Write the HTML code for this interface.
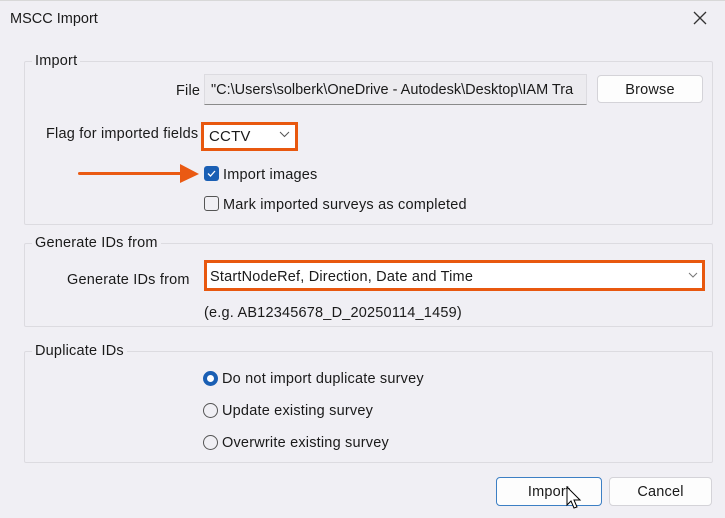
<!DOCTYPE html>
<html><head><style>
*{margin:0;padding:0;box-sizing:border-box}
body{width:725px;height:518px;background:#f0eff4;font-family:"Liberation Sans",sans-serif;font-size:14.5px;letter-spacing:0.2px;color:#1a1a1a;position:relative;overflow:hidden}
.a{position:absolute;white-space:nowrap}
.grp{position:absolute;border:1px solid #dcdbe0;border-radius:2px}
.lg{position:absolute;background:#f0eff4;padding:0 3px;white-space:nowrap}
.orange{border:3px solid #e8580f}
.cb{position:absolute;width:15px;height:15px;border-radius:3px}
.rd{position:absolute;width:15px;height:15px;border-radius:50%}
.btn{position:absolute;background:#fdfdfd;border:1px solid #d4d3d8;border-radius:4px;text-align:center}
</style></head><body>
<div style="position:absolute;left:0;top:0;width:725px;height:1px;background:#d8d8d8"></div>
<div class="a" style="left:10px;top:11px;font-size:14.5px;letter-spacing:0">MSCC Import</div>
<svg class="a" style="left:693px;top:11px" width="14" height="14"><path d="M1 1L13 13M13 1L1 13" stroke="#333" stroke-width="1.3"/></svg>

<div class="grp" style="left:24px;top:61px;width:689px;height:164px"></div>
<div class="lg" style="left:32px;top:53px">Import</div>
<div class="a" style="left:176px;top:83px">File</div>
<div class="a" style="left:204px;top:74px;width:383px;height:31px;background:#ecebef;border:1px solid #dcdbe0;border-bottom:1px solid #8a8a8a;padding:7px 6px;overflow:hidden;letter-spacing:0">"C:\Users\solberk\OneDrive - Autodesk\Desktop\IAM Tra</div>
<div class="btn" style="left:597px;top:75px;width:106px;height:28px;line-height:28px">Browse</div>
<div class="a" style="left:46px;top:126px">Flag for imported fields</div>
<div class="a orange" style="left:201px;top:122px;width:97px;height:29px;background:#fff"></div>
<div class="a" style="left:209px;top:128px;font-size:15px">CCTV</div>
<svg class="a" style="left:279px;top:131px" width="11" height="7"><path d="M1 1L5.5 5.5L10 1" stroke="#555" fill="none"/></svg>
<div class="a" style="left:78px;top:172px;width:110px;height:3px;background:#ea5a13;border-radius:2px"></div>
<svg class="a" style="left:180px;top:164px" width="20" height="20"><path d="M0 0L19 10L0 19Z" fill="#ea5a13"/></svg>
<div class="cb" style="left:204px;top:166px;background:#1a5fb4"><svg width="15" height="15"><path d="M4 7.5L6.5 10L11 5" stroke="#fff" stroke-width="1.3" fill="none"/></svg></div>
<div class="a" style="left:223px;top:167px">Import images</div>
<div class="cb" style="left:204px;top:196px;border:1px solid #555"></div>
<div class="a" style="left:223px;top:197px">Mark imported surveys as completed</div>

<div class="grp" style="left:24px;top:243px;width:689px;height:84px"></div>
<div class="lg" style="left:32px;top:235px">Generate IDs from</div>
<div class="a" style="left:67px;top:272px">Generate IDs from</div>
<div class="a orange" style="left:204px;top:260px;width:501px;height:31px;background:#fff"></div>
<div class="a" style="left:210px;top:269px">StartNodeRef, Direction, Date and Time</div>
<svg class="a" style="left:688px;top:272px" width="10" height="6"><path d="M1 1L5 5L9 1" stroke="#777" fill="none"/></svg>
<div class="a" style="left:204px;top:305px">(e.g. AB12345678_D_20250114_1459)</div>

<div class="grp" style="left:24px;top:351px;width:689px;height:112px"></div>
<div class="lg" style="left:32px;top:343px">Duplicate IDs</div>
<div class="rd" style="left:203px;top:371px;background:#1a5fb4"><div style="position:absolute;left:4px;top:4px;width:7px;height:7px;border-radius:50%;background:#fff"></div></div>
<div class="a" style="left:222px;top:371px">Do not import duplicate survey</div>
<div class="rd" style="left:203px;top:403px;border:1px solid #555"></div>
<div class="a" style="left:222px;top:403px">Update existing survey</div>
<div class="rd" style="left:203px;top:435px;border:1px solid #555"></div>
<div class="a" style="left:222px;top:435px">Overwrite existing survey</div>

<div class="btn" style="left:496px;top:477px;width:106px;height:29px;line-height:29px;border:1px solid #3c7fc4">Import</div>
<svg class="a" style="left:566px;top:486px" width="16" height="24"><path d="M1 1L1 19L5 15L8 22L11 21L8 14L14 14Z" fill="#fff" stroke="#000"/></svg>
<div class="btn" style="left:609px;top:477px;width:103px;height:29px;line-height:29px">Cancel</div>
</body></html>
